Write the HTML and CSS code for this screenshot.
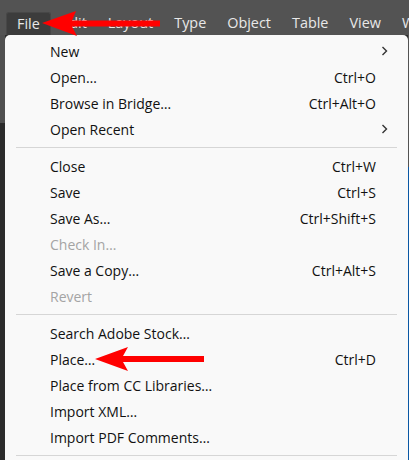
FILE: index.html
```html
<!DOCTYPE html>
<html>
<head>
<meta charset="utf-8">
<link rel="stylesheet" href="styles.css">
</head>
<body>
<div class="app">
  <nav class="menubar">
    <span class="mitem active">File</span>
    <span class="mitem">Edit</span>
    <span class="mitem">Layout</span>
    <span class="mitem">Type</span>
    <span class="mitem">Object</span>
    <span class="mitem">Table</span>
    <span class="mitem">View</span>
    <span class="mitem">Window</span>
  </nav>
  <div class="workspace">
    <div class="dropdown">
      <div class="row"><span class="label">New</span><span class="sub"><svg width="7" height="10" viewBox="0 0 7 10"><polyline points="1.5,1 5.5,5 1.5,9" fill="none" stroke="#333" stroke-width="1.4"/></svg></span></div>
      <div class="row"><span class="label">Open…</span><span class="key">Ctrl+O</span></div>
      <div class="row"><span class="label">Browse in Bridge…</span><span class="key">Ctrl+Alt+O</span></div>
      <div class="row"><span class="label">Open Recent</span><span class="sub"><svg width="7" height="10" viewBox="0 0 7 10"><polyline points="1.5,1 5.5,5 1.5,9" fill="none" stroke="#333" stroke-width="1.4"/></svg></span></div>
      <div class="sep"></div>
      <div class="row"><span class="label">Close</span><span class="key">Ctrl+W</span></div>
      <div class="row"><span class="label">Save</span><span class="key">Ctrl+S</span></div>
      <div class="row"><span class="label">Save As…</span><span class="key">Ctrl+Shift+S</span></div>
      <div class="row disabled"><span class="label">Check In…</span></div>
      <div class="row"><span class="label">Save a Copy…</span><span class="key">Ctrl+Alt+S</span></div>
      <div class="row disabled"><span class="label">Revert</span></div>
      <div class="sep"></div>
      <div class="row"><span class="label">Search Adobe Stock…</span></div>
      <div class="row"><span class="label">Place…</span><span class="key">Ctrl+D</span></div>
      <div class="row"><span class="label">Place from CC Libraries…</span></div>
      <div class="row"><span class="label">Import XML…</span></div>
      <div class="row"><span class="label">Import PDF Comments…</span></div>
      <div class="sep"></div>
    </div>
  </div>
  <svg class="arrows" width="409" height="460" viewBox="0 0 409 460">
    <polygon points="42,23 76,11 72,20.5 160,20.5 160,26.5 72,26.5 77,36" fill="#ff0000"/>
    <polygon points="95,359 128,347 123,356 204,356 204,362 123,362 128,371" fill="#ff0000"/>
  </svg>
</div>
</body>
</html>
```

FILE: styles.css
```css
html, body {
  margin: 0;
  padding: 0;
}
body {
  background: #535353;
  width: 409px;
  height: 460px;
  overflow: hidden;
  font-family: "Open Sans", "Noto Sans", sans-serif;
}
.app {
  position: relative;
  width: 409px;
  height: 460px;
  overflow: hidden;
}
.menubar {
  display: flex;
  align-items: stretch;
  height: 35px;
  box-sizing: border-box;
  padding: 12px 0 0 6px;
  white-space: nowrap;
  overflow: hidden;
  background: #535353;
}
.mitem {
  display: flex;
  align-items: center;
  padding: 0 10.5px 2px;
  font-size: 14.4px;
  color: #e8e8e8;
  flex: none;
}
.mitem.active {
  padding: 0 10px 2px;
  background: #3c3c3c;
  border: 1px solid #474747;
  border-bottom: none;
  border-radius: 3px 3px 0 0;
}
.workspace {
  height: 425px;
  box-sizing: border-box;
  padding-left: 5px;
  background:
    linear-gradient(to bottom, #505050 0, #505050 88px, #2b2b2b 88px, #2b2b2b 100%) left top / 5px 100% no-repeat,
    linear-gradient(to bottom, #535353 0, #535353 132px, #0a57a4 132px, #0a57a4 100%) right top / 1px 100% no-repeat,
    #2b2b2b;
}
.dropdown {
  width: 403px;
  height: 430px;
  box-sizing: border-box;
  background: #f9f9f9;
  border-radius: 5px 5px 0 0;
  padding: 3px 0 0 0;
}
.row {
  display: flex;
  align-items: center;
  height: 26px;
  padding: 0 32px 0 45px;
  font-size: 14px;
  color: #111111;
  position: relative;
}
.label {
  flex: 1;
  white-space: nowrap;
}
.key {
  white-space: nowrap;
}
.row.disabled {
  color: #a4a4a4;
}
.sub {
  position: absolute;
  right: 20px;
  top: 8px;
  display: flex;
}
.sep {
  height: 1px;
  background: #d6d6d6;
  margin: 5px 11px 5px 11px;
}
.arrows {
  position: absolute;
  left: 0;
  top: 0;
  pointer-events: none;
}
```
